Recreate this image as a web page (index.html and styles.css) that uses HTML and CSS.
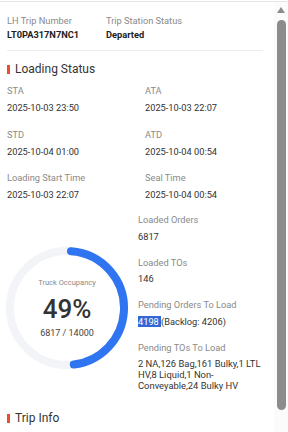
FILE: index.html
```html
<!DOCTYPE html>
<html lang="en">
<head>
<meta charset="utf-8">
<title>Trip Detail</title>
<link rel="stylesheet" href="styles.css">
</head>
<body>
<div class="panel">
  <div class="main">
    <div class="content">
      <div class="head-grid">
        <div class="head-field">
          <div class="label">LH Trip Number</div>
          <div class="strong">LT0PA317N7NC1</div>
        </div>
        <div class="head-field">
          <div class="label">Trip Station Status</div>
          <div class="strong">Departed</div>
        </div>
      </div>
      <div class="divider"></div>

      <div class="section-title"><span class="bar"></span>Loading Status</div>
      <div class="time-grid">
        <div class="field"><div class="label">STA</div><div class="value">2025-10-03 23:50</div></div>
        <div class="field"><div class="label">ATA</div><div class="value">2025-10-03 22:07</div></div>
        <div class="field"><div class="label">STD</div><div class="value">2025-10-04 01:00</div></div>
        <div class="field"><div class="label">ATD</div><div class="value">2025-10-04 00:54</div></div>
        <div class="field"><div class="label">Loading Start Time</div><div class="value">2025-10-03 22:07</div></div>
        <div class="field"><div class="label">Seal Time</div><div class="value">2025-10-04 00:54</div></div>
      </div>

      <div class="occupancy">
        <div class="donut">
          <svg class="ring" width="124" height="124" viewBox="0 0 124 124">
            <circle cx="62" cy="62" r="57" fill="none" stroke="#f2f4f8" stroke-width="8"/>
            <circle cx="62" cy="62" r="57" fill="none" stroke="#2f74f0" stroke-width="8" stroke-linecap="round"
              stroke-dasharray="168 358.1" transform="rotate(-86 62 62)"/>
          </svg>
          <div class="donut-text">
            <div class="donut-label">Truck Occupancy</div>
            <div class="donut-pct">49%</div>
            <div class="donut-count">6817 / 14000</div>
          </div>
        </div>
        <div class="stats">
          <div class="stat"><div class="label">Loaded Orders</div><div class="svalue">6817</div></div>
          <div class="stat"><div class="label">Loaded TOs</div><div class="svalue">146</div></div>
          <div class="stat"><div class="label">Pending Orders To Load</div><div class="svalue"><span class="sel">4198 </span>(Backlog: 4206)</div></div>
          <div class="stat"><div class="label">Pending TOs To Load</div><div class="svalue multi">2 NA,126 Bag,161 Bulky,1 LTL HV,8 Liquid,1 Non-Conveyable,24 Bulky HV</div></div>
        </div>
      </div>

      <div class="section-title trip"><span class="bar"></span>Trip Info</div>
    </div>
  </div>
  <div class="scrollbar">
    <div class="arrow"></div>
    <div class="thumb"></div>
  </div>
</div>
</body>
</html>
```

FILE: styles.css
```css
html, body {
  margin: 0;
  padding: 0;
  height: 432px;
  overflow: hidden;
  background: #ffffff;
}
body {
  font-family: Roboto, "Noto Sans", "Liberation Sans", sans-serif;
  color: #333;
  padding-top: 1px;
  box-sizing: border-box;
}
.panel {
  border-top: 1px solid #e6e6e6;
  width: 288px;
  height: 460px;
  display: flex;
}
.main {
  width: 274px;
  flex: none;
  overflow: hidden;
}
.scrollbar {
  width: 14px;
  flex: none;
  background: #fbfbfb;
  display: flex;
  flex-direction: column;
  align-items: center;
}
.arrow {
  width: 0;
  height: 0;
  border-left: 4.5px solid transparent;
  border-right: 4.5px solid transparent;
  border-bottom: 6px solid #8c8c8c;
  margin-top: 5px;
}
.thumb {
  width: 9px;
  height: 390px;
  border-radius: 4.5px;
  background: #8c8c8c;
  margin-top: 7px;
}
.content {
  padding: 12px 11px 0 7px;
  font-size: 9.25px;
}
.label {
  color: #8a8a8a;
  line-height: 14px;
}
.head-grid {
  display: grid;
  grid-template-columns: 99px 1fr;
}
.head-field {
  display: flex;
  flex-direction: column;
}
.strong {
  font-weight: 700;
  color: #222;
  line-height: 14px;
}
.divider {
  height: 1px;
  background: #ececf0;
  margin-top: 8px;
}
.section-title {
  display: flex;
  align-items: center;
  gap: 5px;
  font-size: 12px;
  line-height: 16px;
  color: #333;
  margin-top: 10px;
}
.bar {
  width: 3px;
  height: 9px;
  background: #ee4d2d;
}
.time-grid {
  display: grid;
  grid-template-columns: 138px 1fr;
  row-gap: 12.5px;
  margin-top: 7px;
}
.field {
  display: flex;
  flex-direction: column;
  gap: 3px;
}
.value {
  line-height: 14px;
  color: #333;
}
.occupancy {
  display: flex;
  margin-top: 11px;
}
.donut {
  width: 133px;
  flex: none;
  display: grid;
  align-self: flex-start;
  margin-top: 33px;
  margin-left: -2px;
}
.ring, .donut-text {
  grid-area: 1 / 1;
}
.donut-text {
  width: 124px;
  height: 124px;
  display: flex;
  flex-direction: column;
  align-items: center;
  justify-content: center;
}
.donut-label {
  font-size: 7.5px;
  line-height: 10px;
  color: #8a8a8a;
}
.donut-pct {
  font-size: 26px;
  line-height: 30px;
  font-weight: 500;
  color: #333;
  margin-top: 6px;
}
.donut-count {
  font-size: 9px;
  line-height: 12px;
  color: #444;
  margin-top: 3px;
}
.stats {
  flex: 1;
  display: flex;
  flex-direction: column;
  gap: 14px;
}
.stat {
  display: flex;
  flex-direction: column;
  gap: 3.5px;
}
.svalue {
  line-height: 11px;
  color: #333;
}
.svalue.multi {
  font-size: 9.4px;
}
.sel {
  background: #3367d6;
  color: #fff;
}
.trip {
  margin-top: 19px;
}
```
